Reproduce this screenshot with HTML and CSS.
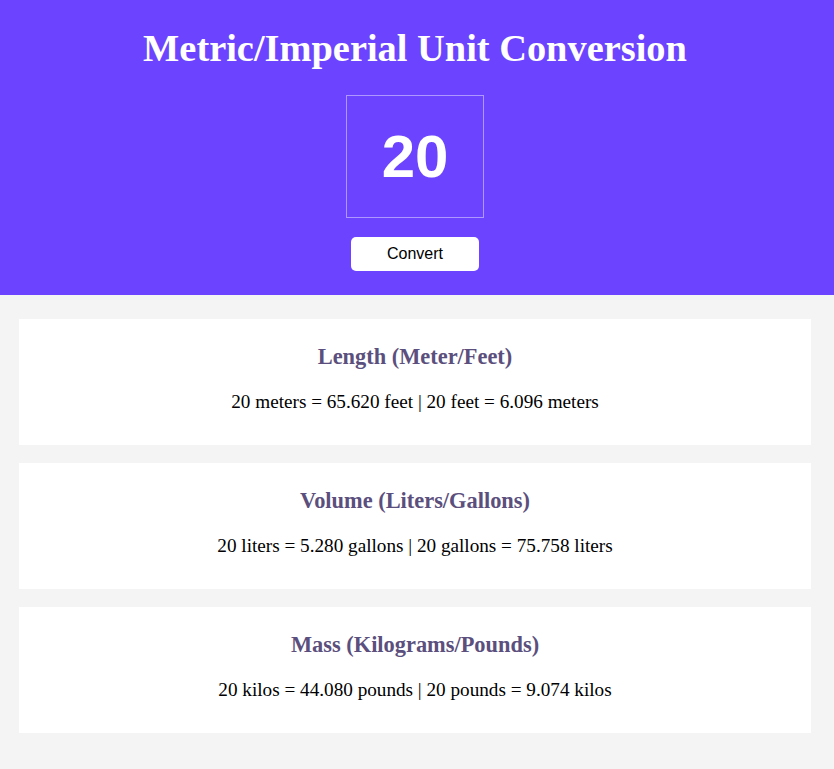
FILE: index.html
```html
<!DOCTYPE html>
<html lang="en">
<head>
<meta charset="utf-8">
<title>Metric/Imperial Unit Conversion</title>
<link rel="stylesheet" href="styles.css">
</head>
<body>
<header class="hero">
  <h1 class="title">Metric/Imperial Unit Conversion</h1>
  <div class="number-box">20</div>
  <button class="convert-btn" type="button">Convert</button>
</header>
<main class="results">
  <section class="card">
    <h2 class="card-title">Length (Meter/Feet)</h2>
    <p class="card-text">20 meters = 65.620 feet | 20 feet = 6.096 meters</p>
  </section>
  <section class="card">
    <h2 class="card-title">Volume (Liters/Gallons)</h2>
    <p class="card-text">20 liters = 5.280 gallons | 20 gallons = 75.758 liters</p>
  </section>
  <section class="card">
    <h2 class="card-title">Mass (Kilograms/Pounds)</h2>
    <p class="card-text">20 kilos = 44.080 pounds | 20 pounds = 9.074 kilos</p>
  </section>
</main>
</body>
</html>
```

FILE: styles.css
```css
* { box-sizing: border-box; }
html, body { margin: 0; padding: 0; }
body {
  background: #f4f4f4;
  font-family: "Liberation Serif", "Times New Roman", serif;
  min-height: 769px;
}
.hero {
  background: #6c43ff;
  height: 295px;
  display: flex;
  flex-direction: column;
  align-items: center;
  padding: 26px 4px 0 0;
}
.title {
  margin: 0;
  color: #ffffff;
  font-size: 38.4px;
  line-height: 44px;
  font-weight: bold;
}
.number-box {
  margin-top: 25px;
  width: 138px;
  height: 123px;
  border: 1px solid rgba(255, 255, 255, 0.45);
  color: #ffffff;
  font-family: "Liberation Sans", Arial, sans-serif;
  font-weight: bold;
  font-size: 60px;
  display: flex;
  align-items: center;
  justify-content: center;
}
.convert-btn {
  margin-top: 19px;
  width: 128px;
  height: 34px;
  border: none;
  border-radius: 5px;
  background: #ffffff;
  color: #000000;
  font-family: "Liberation Sans", Arial, sans-serif;
  font-size: 16px;
  padding: 0;
}
.results {
  display: flex;
  flex-direction: column;
  gap: 18px;
  width: 792px;
  margin: 24px 0 0 19px;
}
.card {
  background: #ffffff;
  height: 126px;
  display: flex;
  flex-direction: column;
  align-items: center;
  padding-top: 24px;
}
.card-title {
  margin: 0;
  color: #5b4f7d;
  font-size: 22.4px;
  line-height: 28px;
  font-weight: bold;
}
.card-text {
  margin: 20px 0 0;
  color: #000000;
  font-size: 19.2px;
  line-height: 22px;
}
```
